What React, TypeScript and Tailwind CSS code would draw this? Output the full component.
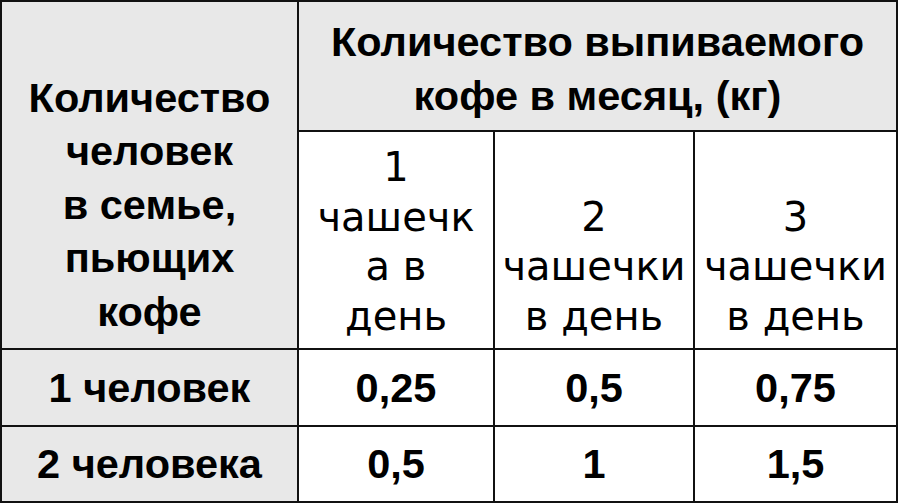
import React from "react";

const bold = "[font-family:'Liberation_Sans'] font-bold text-[41.5px] leading-[53.5px] text-black";
const light = "[font-family:'DejaVu_Sans'] font-normal text-[40px] leading-[49.5px] text-black";

const rows = [
  { label: "1 человек", values: ["0,25", "0,5", "0,75"] },
  { label: "2 человека", values: ["0,5", "1", "1,5"] },
];

const App: React.FC = () => {
  return (
    <div className="w-[900px] h-[504px] bg-white">
      <div className="w-[898px] h-[503px] bg-[#111] p-[2px] grid gap-[2px] grid-cols-[295px_194px_198px_201px] grid-rows-[128px_216px_75px_74px]">
        {/* left header */}
        <div className={`row-span-2 bg-[#e8e8e8] flex flex-col items-center justify-end pb-[10px] text-center ${bold}`}>
          <span>Количество</span>
          <span>человек</span>
          <span>в семье,</span>
          <span>пьющих</span>
          <span>кофе</span>
        </div>

        {/* top header */}
        <div className={`col-span-3 bg-[#e8e8e8] flex flex-col items-center justify-end pb-[8px] text-center ${bold}`}>
          <span>Количество выпиваемого</span>
          <span>кофе в месяц, (кг)</span>
        </div>

        <div className={`bg-white flex flex-col items-center justify-end pb-[7px] text-center whitespace-nowrap ${light}`}>
          <span>1</span>
          <span>чашечк</span>
          <span>а в</span>
          <span>день</span>
        </div>
        <div className={`bg-white flex flex-col items-center justify-end pb-[7px] text-center whitespace-nowrap ${light}`}>
          <span>2</span>
          <span>чашечки</span>
          <span>в день</span>
        </div>
        <div className={`bg-white flex flex-col items-center justify-end pb-[7px] text-center whitespace-nowrap ${light}`}>
          <span>3</span>
          <span>чашечки</span>
          <span>в день</span>
        </div>

        {rows.map((r) => (
          <React.Fragment key={r.label}>
            <div className={`bg-[#e8e8e8] flex items-center justify-center ${bold}`}>{r.label}</div>
            {r.values.map((v, i) => (
              <div key={i} className={`bg-white flex items-center justify-center ${bold}`}>
                {v}
              </div>
            ))}
          </React.Fragment>
        ))}
      </div>
    </div>
  );
};

export default App;
